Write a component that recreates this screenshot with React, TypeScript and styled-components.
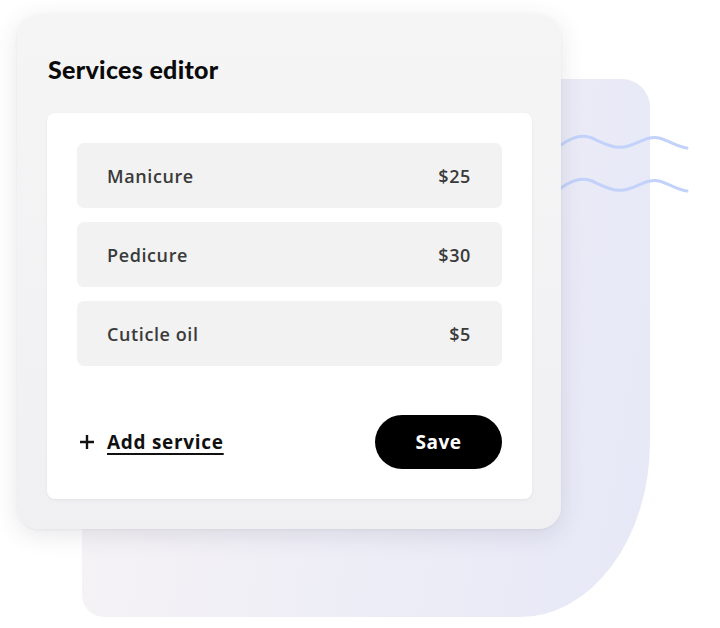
import styled, { createGlobalStyle } from "styled-components";

const GlobalStyle = createGlobalStyle`
  html, body {
    margin: 0;
    padding: 0;
    background: #ffffff;
  }
  body {
    font-family: "Open Sans", "Liberation Sans", sans-serif;
  }
`;

const Stage = styled.div`
  position: relative;
  width: 720px;
  height: 628px;
  overflow: hidden;
  padding: 14px 0 0 17px;
  box-sizing: border-box;
`;

// soft backdrop shape behind the card
const Backdrop = styled.div`
  position: absolute;
  left: 82px;
  top: 79px;
  width: 568px;
  height: 538px;
  border-radius: 0 28px 130px 22px / 0 28px 175px 22px;
  background: linear-gradient(100deg, #f8f4f6 0%, #f0eff6 40%, #e6e8f7 100%);
`;

const Waves = styled.svg`
  position: absolute;
  left: 540px;
  top: 125px;
`;

const Card = styled.div`
  position: relative;
  width: 544px;
  height: 515px;
  box-sizing: border-box;
  padding: 40px 29px 30px 30px;
  border-radius: 22px;
  background: linear-gradient(180deg, #f5f5f6 0%, #f0f0f2 100%);
  box-shadow: 0 6px 24px rgba(60, 60, 90, 0.12), 0 1px 3px rgba(0, 0, 0, 0.05);
  display: flex;
  flex-direction: column;
  gap: 29px;
`;

const Title = styled.h1`
  margin: 0 0 0 1px;
  font-family: "Lato", "Open Sans", sans-serif;
  font-weight: 900;
  font-size: 25px;
  line-height: 30px;
  color: #0a0a0a;
  letter-spacing: 0.3px;
`;

const Panel = styled.div`
  flex: 1;
  background: #ffffff;
  border-radius: 8px;
  padding: 30px;
  box-shadow: 0 1px 3px rgba(0, 0, 0, 0.06);
  display: flex;
  flex-direction: column;
`;

const List = styled.div`
  display: flex;
  flex-direction: column;
  gap: 14px;
`;

const Row = styled.div`
  height: 65px;
  box-sizing: border-box;
  padding: 0 31px 0 30px;
  border-radius: 7px;
  background: #f2f2f2;
  display: flex;
  align-items: center;
  justify-content: space-between;
  font-size: 18px;
  font-weight: 600;
  letter-spacing: 0.6px;
  color: #3a3a3a;
`;

const Footer = styled.div`
  margin-top: auto;
  display: flex;
  align-items: center;
  justify-content: space-between;
`;

const AddLink = styled.a`
  display: flex;
  align-items: center;
  gap: 12px;
  padding-left: 2px;
  color: #111111;
  font-size: 19px;
  font-weight: 700;
  letter-spacing: 0.7px;
  cursor: pointer;

  span {
    text-decoration: underline;
    text-decoration-thickness: 1.5px;
    text-underline-offset: 4px;
  }
`;

const SaveButton = styled.button`
  width: 127px;
  height: 54px;
  border: none;
  border-radius: 27px;
  background: #000000;
  color: #ffffff;
  font-family: "Open Sans", sans-serif;
  font-size: 19px;
  font-weight: 700;
  letter-spacing: 0.5px;
  cursor: pointer;
`;

const services = [
  { name: "Manicure", price: "$25" },
  { name: "Pedicure", price: "$30" },
  { name: "Cuticle oil", price: "$5" },
];

const wave = "M21 20 C 35 10, 45 10, 52 13 S 72 24, 84 22 S 108 10, 119 13 S 138 22, 147 23";

export default function App() {
  return (
    <>
      <GlobalStyle />
      <Stage>
        <Backdrop />
        <Waves width="160" height="80" viewBox="0 0 160 80" fill="none">
          <path d={wave} stroke="#c3d2fa" strokeWidth="3" strokeLinecap="round" />
          <path d={wave} transform="translate(0 43)" stroke="#c3d2fa" strokeWidth="3" strokeLinecap="round" />
        </Waves>
        <Card>
          <Title>Services editor</Title>
          <Panel>
            <List>
              {services.map((s) => (
                <Row key={s.name}>
                  <span>{s.name}</span>
                  <span>{s.price}</span>
                </Row>
              ))}
            </List>
            <Footer>
              <AddLink>
                <svg width="16" height="16" viewBox="0 0 16 16">
                  <path d="M8 1v14M1 8h14" stroke="#111" strokeWidth="2.4" />
                </svg>
                <span>Add service</span>
              </AddLink>
              <SaveButton>Save</SaveButton>
            </Footer>
          </Panel>
        </Card>
      </Stage>
    </>
  );
}
